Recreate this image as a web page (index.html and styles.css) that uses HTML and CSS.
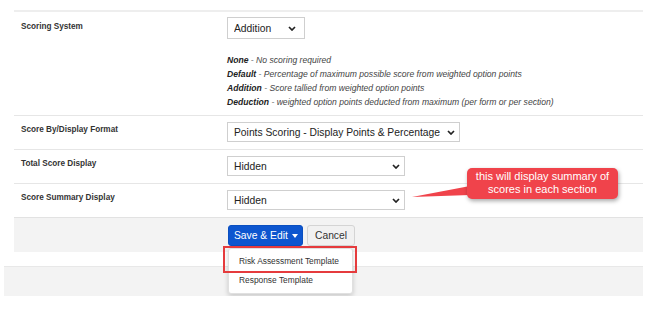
FILE: index.html
```html
<!DOCTYPE html>
<html lang="en">
<head>
    <meta charset="UTF-8">
    <title>Scoring Settings</title>
    <link rel="stylesheet" href="styles.css">
</head>
<body>
    <div class="form">
        <div class="row row-first">
            <div class="label">Scoring System</div>
            <div class="value">
                <select class="sel sel-addition">
                    <option>Addition</option>
                </select>
                <div class="help">
                    <p><b>None</b> - No scoring required</p>
                    <p><b>Default</b> - Percentage of maximum possible score from weighted option points</p>
                    <p><b>Addition</b> - Score tallied from weighted option points</p>
                    <p><b>Deduction</b> - weighted option points deducted from maximum (per form or per section)</p>
                </div>
            </div>
        </div>

        <div class="row">
            <div class="label">Score By/Display Format</div>
            <div class="value">
                <select class="sel sel-format">
                    <option>Points Scoring - Display Points &amp; Percentage</option>
                </select>
            </div>
        </div>

        <div class="row">
            <div class="label">Total Score Display</div>
            <div class="value">
                <select class="sel sel-hidden">
                    <option>Hidden</option>
                </select>
            </div>
        </div>

        <div class="row">
            <div class="label">Score Summary Display</div>
            <div class="value">
                <select class="sel sel-hidden">
                    <option>Hidden</option>
                </select>
            </div>
        </div>

        <div class="actions">
            <div class="btn-group">
                <button class="btn btn-primary">Save &amp; Edit <span class="caret"></span></button>
                <ul class="menu">
                    <li>Risk Assessment Template</li>
                    <li>Response Template</li>
                </ul>
                <!-- annotation box round the first menu item -->
                <div class="highlight"></div>
            </div>
            <button class="btn btn-default">Cancel</button>
        </div>
    </div>

    <div class="bar"></div>

    <!-- callout annotation -->
    <svg class="callout-tail" width="60" height="16" viewBox="0 0 60 16">
        <polygon points="2,13 60,2 60,11" fill="#f0434b"/>
    </svg>
    <div class="callout">this will display summary of<br>scores in each section</div>
</body>
</html>
```

FILE: styles.css
```css
body {
    margin: 0;
    padding-top: 10px;
    font-family: "Liberation Sans", Arial, sans-serif;
    color: #333;
    background: #fff;
}
.form {
    margin-left: 14px;
    width: 629px;
}
.row {
    display: grid;
    grid-template-columns: 213px 1fr;
    border-top: 1px solid #e6e6e6;
    padding: 6px 0 7px;
}
.row-first {
    border-top: 2px solid #eeeeee;
    padding: 5px 0 6px;
}
.label {
    padding: 3px 0 0 7px;
    font-size: 8.2px;
    line-height: 10px;
    font-weight: bold;
    color: #333;
}
.row-first .label {
    padding-top: 5px;
}
.sel {
    display: block;
    appearance: none;
    -webkit-appearance: none;
    height: 20px;
    margin: 0;
    padding: 0 0 0 6px;
    border: 1px solid #cfcfcf;
    border-radius: 0;
    font-family: "Liberation Sans", Arial, sans-serif;
    font-size: 10.3px;
    color: #222;
    background: #fff url("data:image/svg+xml,%3Csvg xmlns='http://www.w3.org/2000/svg' width='8' height='5' viewBox='0 0 8 5'%3E%3Cpath d='M1 1l3 3 3-3' fill='none' stroke='%23222' stroke-width='1.7'/%3E%3C/svg%3E") no-repeat right 4px center;
}
.sel-addition {
    width: 78px;
    height: 22px;
    background-position: right 8px center;
}
.sel-format {
    width: 233px;
}
.sel-hidden {
    width: 178px;
}
.help {
    margin-top: 14px;
    font-size: 8.6px;
    line-height: 14px;
    font-style: italic;
    color: #444;
}
.help p {
    margin: 0;
}
.help b {
    color: #222;
}
.actions {
    display: flex;
    gap: 4px;
    padding: 7px 0 0 214px;
    box-sizing: border-box;
    height: 35px;
    border-top: 1px solid #e2e2e2;
    background: #f3f3f3;
}
.btn-group {
    position: relative;
}
.btn {
    height: 21px;
    padding: 0 5px;
    border-radius: 3px;
    font-family: "Liberation Sans", Arial, sans-serif;
    font-size: 10.3px;
    white-space: nowrap;
    cursor: pointer;
}
.btn-primary {
    width: 75px;
    border: 1px solid #0a4fc0;
    background: #0d56cf;
    color: #fff;
}
.btn-default {
    width: 48px;
    border: 1px solid #d4d4d4;
    background: #f1f1f1;
    color: #333;
}
.caret {
    display: inline-block;
    vertical-align: middle;
    margin-left: 1px;
    border-top: 4px solid #fff;
    border-left: 3px solid transparent;
    border-right: 3px solid transparent;
}
.menu {
    position: absolute;
    top: 23px;
    left: 0;
    width: 125px;
    margin: 0;
    padding: 3px 0;
    list-style: none;
    background: #fff;
    border: 1px solid #e0e0e0;
    border-radius: 3px;
    box-shadow: 0 2px 5px rgba(0, 0, 0, 0.18);
    box-sizing: border-box;
    z-index: 2;
}
.menu li {
    height: 19px;
    line-height: 19px;
    padding-left: 10px;
    font-size: 8.4px;
    color: #333;
}
.highlight {
    position: absolute;
    top: 21px;
    left: -5px;
    width: 134px;
    height: 27px;
    box-sizing: border-box;
    border: 2px solid #e53b3d;
    z-index: 3;
}
.bar {
    margin: 14px 0 0 4px;
    width: 639px;
    height: 30px;
    border-top: 1px solid #e8e8e8;
    background: #f3f3f3;
    box-sizing: border-box;
}
.callout {
    position: absolute;
    left: 467px;
    top: 168px;
    width: 151px;
    height: 31px;
    padding-top: 2px;
    box-sizing: border-box;
    border-radius: 5px;
    background: #f0434b;
    color: #fff;
    font-size: 11px;
    line-height: 13px;
    text-align: center;
    box-shadow: 1px 2px 4px rgba(0, 0, 0, 0.35);
}
.callout-tail {
    position: absolute;
    left: 410px;
    top: 184px;
}
```
